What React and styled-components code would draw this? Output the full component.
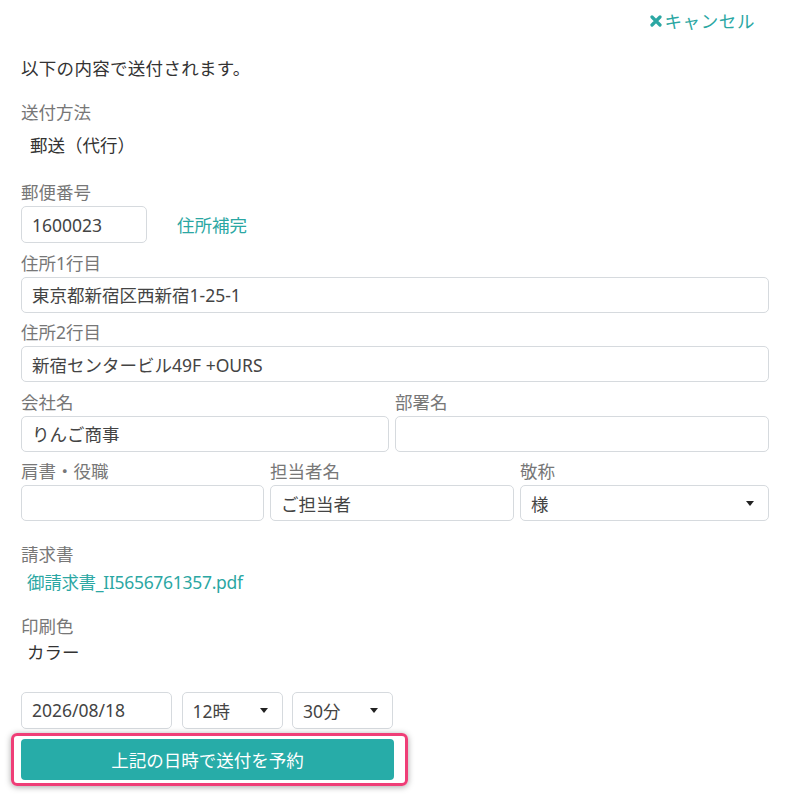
import React from "react";
import styled, { createGlobalStyle } from "styled-components";

const GlobalStyle = createGlobalStyle`
  html, body { margin: 0; padding: 0; background: #fff; }
  body {
    font-family: "Noto Sans", "Noto Sans CJK JP", sans-serif;
    font-size: 17.5px;
    color: #333;
  }
  * { box-sizing: border-box; }
`;

const TEAL = "#2ba7a3";

const Page = styled.div`
  width: 790px;
  padding: 0 21px 20px 21px;
`;

const TopBar = styled.div`
  display: flex;
  justify-content: flex-end;
  padding: 9px 14px 0 0;
`;

const CancelLink = styled.a`
  display: inline-flex;
  align-items: center;
  gap: ${(p) => (p.$icon ? 3 : 0)}px;
  color: ${TEAL};
  line-height: 24px;
  text-decoration: none;
  cursor: pointer;
  letter-spacing: ${(p) => (p.$icon ? 0.6 : 0)}px;
`;

const Intro = styled.p`
  margin: 23px 0 0 0;
  line-height: 24px;
  color: #333;
  letter-spacing: 0.3px;
`;

const Label = styled.div`
  line-height: 24px;
  color: #777;
  margin-top: ${(p) => p.$mt ?? 0}px;
  margin-bottom: ${(p) => p.$mb ?? 0}px;
`;

const Value = styled.div`
  line-height: 24px;
  color: #333;
  padding-left: ${(p) => p.$indent}px;
  margin-top: ${(p) => p.$mt}px;
`;

const FileLink = styled.a`
  display: block;
  line-height: 24px;
  color: ${TEAL};
  padding-left: 6px;
  margin-top: 4px;
  text-decoration: none;
  letter-spacing: -0.3px;
`;

const Field = styled.div`
  margin-top: ${(p) => p.$mt ?? 7.5}px;
  min-width: 0;
`;

const Input = styled.input`
  display: block;
  width: ${(p) => p.$w || "100%"};
  height: ${(p) => p.$h || 36}px;
  border: 1px solid #d6dade;
  border-radius: 5px;
  padding: 0 10px;
  font: inherit;
  font-size: 17.5px;
  color: #444;
  background: #fff;
  outline: none;
`;

const PostalRow = styled.div`
  display: flex;
  align-items: center;
  gap: 30px;
`;

const Row = styled.div`
  display: grid;
  grid-template-columns: ${(p) => p.$cols};
  column-gap: 6px;
`;

const SelectBox = styled.div`
  display: flex;
  align-items: center;
  justify-content: space-between;
  width: ${(p) => p.$w || "100%"};
  height: ${(p) => p.$h || 36}px;
  border: 1px solid #d6dade;
  border-radius: 5px;
  padding: 0 14px 0 10px;
  color: #444;
  background: #fff;
`;

const Caret = styled.span`
  width: 0;
  height: 0;
  border-left: 4.5px solid transparent;
  border-right: 4.5px solid transparent;
  border-top: 5px solid #222;
`;

const InvoiceBlock = styled.div`
  margin-top: 20.5px;
`;

const DateRow = styled.div`
  display: flex;
  gap: 9.5px;
  margin-top: 28px;
`;

const ButtonWrap = styled.div`
  position: relative;
  width: 373px;
  margin-top: 10px;
`;

const Highlight = styled.div`
  position: absolute;
  left: -10px;
  right: -14px;
  top: -6px;
  bottom: -6px;
  border: 3px solid #ef3e77;
  border-radius: 6px;
  box-shadow: 0 1px 6px rgba(0, 0, 0, 0.35);
  pointer-events: none;
`;

const SubmitButton = styled.button`
  display: block;
  width: 100%;
  height: 41px;
  border: none;
  border-radius: 4px;
  background: #27aca8;
  color: #fff;
  font: inherit;
  font-size: 17.5px;
  cursor: pointer;
`;

const CloseIcon = () => (
  <svg width="12" height="12" viewBox="0 0 12 12" aria-hidden="true">
    <path
      d="M2 2 L10 10 M10 2 L2 10"
      stroke="currentColor"
      strokeWidth="3.2"
      strokeLinecap="round"
      fill="none"
    />
  </svg>
);

export default function App() {
  return (
    <>
      <GlobalStyle />
      <Page>
        <TopBar>
          <CancelLink $icon>
            <CloseIcon />
            キャンセル
          </CancelLink>
        </TopBar>
        <Intro>以下の内容で送付されます。</Intro>

        <Label $mt={20}>送付方法</Label>
        <Value $indent={9} $mt={9}>郵送（代行）</Value>

        <Label $mt={23} $mb={2}>郵便番号</Label>
        <PostalRow>
          <Input $w="126px" $h={37} value="1600023" readOnly />
          <CancelLink>住所補完</CancelLink>
        </PostalRow>

        <Field>
          <Label $mb={2}>住所1行目</Label>
          <Input value="東京都新宿区西新宿1-25-1" readOnly />
        </Field>
        <Field>
          <Label $mb={2}>住所2行目</Label>
          <Input value="新宿センタービル49F +OURS" readOnly />
        </Field>

        <Row $cols="368px 1fr">
          <Field>
            <Label $mb={2}>会社名</Label>
            <Input value="りんご商事" readOnly />
          </Field>
          <Field>
            <Label $mb={2}>部署名</Label>
            <Input value="" readOnly />
          </Field>
        </Row>

        <Row $cols="243px 244px 1fr">
          <Field>
            <Label $mb={2}>肩書・役職</Label>
            <Input value="" readOnly />
          </Field>
          <Field>
            <Label $mb={2}>担当者名</Label>
            <Input value="ご担当者" readOnly />
          </Field>
          <Field>
            <Label $mb={2}>敬称</Label>
            <SelectBox>
              <span>様</span>
              <Caret />
            </SelectBox>
          </Field>
        </Row>

        <InvoiceBlock>
          <Label>請求書</Label>
          <FileLink>御請求書_II5656761357.pdf</FileLink>
        </InvoiceBlock>

        <Label $mt={20}>印刷色</Label>
        <Value $indent={6} $mt={2}>カラー</Value>

        <DateRow>
          <Input $w="151px" $h={37} value="2026/08/18" readOnly />
          <SelectBox $w="101px" $h={37}>
            <span>12時</span>
            <Caret />
          </SelectBox>
          <SelectBox $w="101px" $h={37}>
            <span>30分</span>
            <Caret />
          </SelectBox>
        </DateRow>

        <ButtonWrap>
          <SubmitButton>上記の日時で送付を予約</SubmitButton>
          <Highlight />
        </ButtonWrap>
      </Page>
    </>
  );
}
